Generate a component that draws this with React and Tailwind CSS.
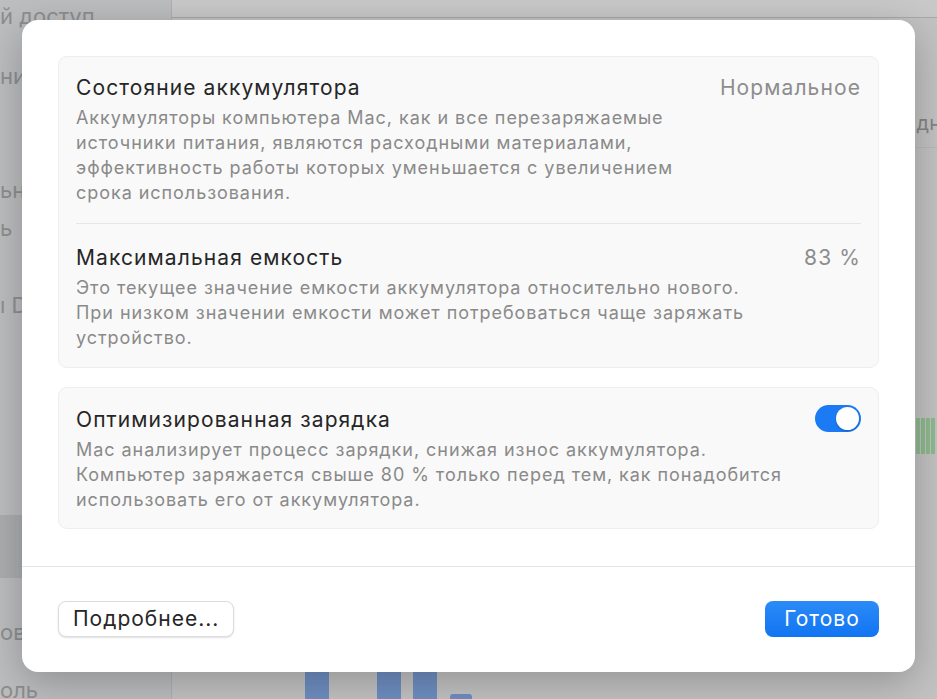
import React from 'react';

const font = { fontFamily: 'Inter, "Noto Sans", sans-serif' };

const SidebarItem = ({ text, className = '' }) => (
  <div className={`h-[38px] shrink-0 flex items-center text-[22px] text-[#8e8f91] whitespace-nowrap ${className}`}>
    {text}
  </div>
);

const Gap = ({ className }) => <div className={`shrink-0 ${className}`} />;

const Background = () => (
  <div className="flex h-full">
    <div className="w-[172px] shrink-0 bg-[#bdbec0] border-r border-[#b0b0b0] flex flex-col overflow-hidden">
      <SidebarItem text="й доступ" className="-mt-[3px]" />
      <Gap className="h-[22px]" />
      <SidebarItem text="ни" />
      <Gap className="h-[76px]" />
      <SidebarItem text="ьн" />
      <SidebarItem text="ь" />
      <Gap className="h-[39px]" />
      <SidebarItem text="ı D" />
      <Gap className="h-[191px]" />
      <Gap className="h-[63px] bg-[#adaeb0]" />
      <Gap className="h-[35px]" />
      <SidebarItem text="ов" />
      <Gap className="h-[20px]" />
      <SidebarItem text="оль" />
    </div>
    <div className="flex-1 flex flex-col bg-[#c3c3c3]">
      <div className="h-[18px] border-b border-[#a9a9a9] bg-[#c9c9c9]" />
      <div className="flex-1 mx-[40px] mt-[10px] flex flex-col">
        <div className="h-[40px] border-b border-[#b9b9b9]" />
        <div className="h-[30px] border-b border-[#b9b9b9]" />
        <div className="h-[50px] border-b border-[#b9b9b9] flex items-center justify-end text-[20px] text-[#858585] -mr-[40px] overflow-hidden">
          <span className="translate-x-[4px]">дн</span>
        </div>
        <div className="h-[100px] border-b border-[#b9b9b9]" />
        <div className="h-[28px] border-b border-[#b9b9b9]" />
        <div className="h-[28px] border-b border-[#b9b9b9]" />
        <div className="h-[180px] flex items-start justify-end -mr-[40px]">
          <svg width="26" height="36" className="mt-[114px]">
            {[0, 5, 10, 15, 20].map((x) => (
              <rect key={x} x={x} y="0" width="4" height="36" fill="#8fbb8f" />
            ))}
          </svg>
        </div>
        <div className="flex-1 border-b border-[#b9b9b9]" />
        <div className="h-[28px] flex items-end">
          <svg width="400" height="28">
            <rect x="93" y="1" width="24" height="27" fill="#6f8fc2" />
            <rect x="165" y="1" width="24" height="27" fill="#6f8fc2" />
            <rect x="201" y="1" width="24" height="27" fill="#6f8fc2" />
            <rect x="238" y="23" width="22" height="8" rx="3" fill="#6f8fc2" />
          </svg>
        </div>
      </div>
    </div>
  </div>
);

const Toggle = () => (
  <div className="w-[46px] h-[27px] rounded-full bg-[#1a7bf5] flex items-center justify-end px-[2px] shrink-0">
    <div className="w-[23px] h-[23px] rounded-full bg-white shadow-[0_1px_2px_rgba(0,0,0,0.25)]" />
  </div>
);

const Row = ({ title, desc, right }) => (
  <div className="flex items-start justify-between gap-4">
    <div className="flex flex-col">
      <div className="text-[21px] leading-[24px] tracking-[1.1px] text-[#262626]">{title}</div>
      <div className="mt-[5px] text-[18px] leading-[25px] tracking-[0.95px] text-[#8a8a8a]">
        {desc.map((l, i) => (
          <div key={i} className="whitespace-nowrap">{l}</div>
        ))}
      </div>
    </div>
    {right}
  </div>
);

const Value = ({ children }) => (
  <div className="text-[21px] leading-[24px] tracking-[1.1px] text-[#8d8d8d] whitespace-nowrap">{children}</div>
);

const Dialog = () => (
  <div className="absolute left-[22px] top-[20px] w-[893px] h-[652px] bg-white rounded-[16px] shadow-[0_10px_40px_rgba(0,0,0,0.25)] flex flex-col">
    <div className="px-[36px] pt-[36px] flex flex-col gap-[19px]">
      <div className="rounded-[9px] bg-[#f9f9f9] border border-[#eeeeee] px-[17px] pt-[19px] pb-[17px] flex flex-col">
        <Row
          title="Состояние аккумулятора"
          desc={[
            'Аккумуляторы компьютера Mac, как и все перезаряжаемые',
            'источники питания, являются расходными материалами,',
            'эффективность работы которых уменьшается с увеличением',
            'срока использования.',
          ]}
          right={<Value>Нормальное</Value>}
        />
        <div className="h-px bg-[#e6e6e6] mt-[18px] mb-[22px]" />
        <Row
          title="Максимальная емкость"
          desc={[
            'Это текущее значение емкости аккумулятора относительно нового.',
            'При низком значении емкости может потребоваться чаще заряжать',
            'устройство.',
          ]}
          right={<Value>83 %</Value>}
        />
      </div>
      <div className="rounded-[9px] bg-[#f9f9f9] border border-[#eeeeee] px-[17px] pt-[20px] pb-[16px]">
        <Row
          title="Оптимизированная зарядка"
          desc={[
            'Mac анализирует процесс зарядки, снижая износ аккумулятора.',
            'Компьютер заряжается свыше 80 % только перед тем, как понадобится',
            'использовать его от аккумулятора.',
          ]}
          right={<div className="-mt-[3px]"><Toggle /></div>}
        />
      </div>
    </div>
    <div className="h-px bg-[#e5e5e5] mt-[37px]" />
    <div className="flex-1 flex items-center justify-between px-[36px] pb-[2px]">
      <button className="h-[36px] px-[14px] rounded-[8px] bg-white border border-[#dcdcdc] shadow-[0_1px_2px_rgba(0,0,0,0.12)] text-[21px] tracking-[1px] text-[#262626]">
        Подробнее...
      </button>
      <button className="h-[36px] w-[114px] rounded-[8px] bg-gradient-to-b from-[#2a8bf7] to-[#1174f2] text-[21px] tracking-[1px] text-white">
        Готово
      </button>
    </div>
  </div>
);

export default function App() {
  return (
    <div className="relative w-[937px] h-[699px] overflow-hidden" style={font}>
      <Background />
      <Dialog />
    </div>
  );
}
